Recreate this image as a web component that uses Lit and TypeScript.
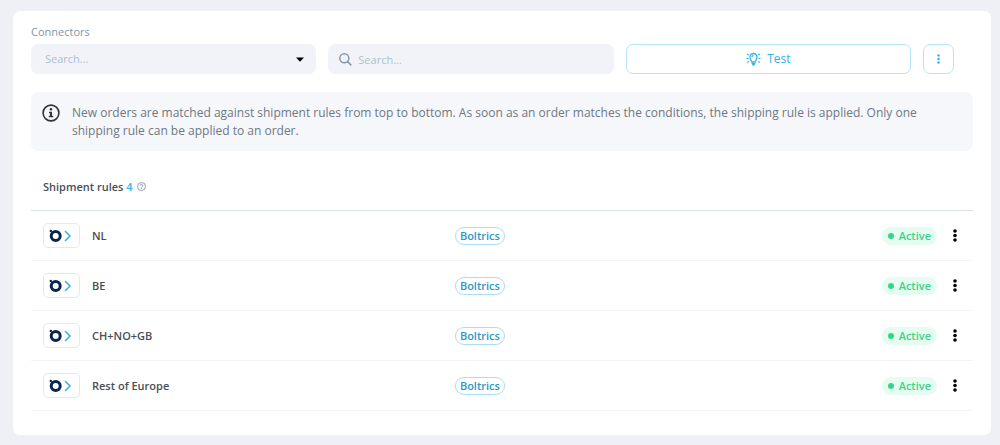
import { LitElement, html, css, svg } from "lit";
import { customElement, property } from "lit/decorators.js";

@customElement("rule-table")
class RuleTable extends LitElement {
  @property({ attribute: false }) rules: string[] = [];

  static styles = css`
    :host { display: block; }
    table { width: 100%; border-collapse: separate; border-spacing: 0; table-layout: fixed; border-top: 1px solid #d9dde4; }
    td { height: 49px; padding: 0; border-bottom: 1px solid #f3f4f7; vertical-align: middle; }
    .col-name { width: 45%; }
    .col-menu { width: 36px; }
    .name { display: flex; align-items: center; gap: 12px; padding-left: 12px; font-weight: 600; color: #484e56; }
    .logo { box-sizing: border-box; width: 37px; height: 25px; border: 1px solid #e6e8ec; border-radius: 5px; }
    .logo svg { display: block; }
    .status { text-align: right; }
    .tag, .active { display: inline-flex; align-items: center; box-sizing: border-box; height: 18px; border-radius: 9px; font-weight: 600; vertical-align: middle; }
    .tag { padding: 0 4px; border: 1px solid #a9def5; color: #2f97c4; }
    .active { gap: 5px; padding: 0 6px; background: #e4fdf0; color: #44cf8b; }
    .dot { width: 6px; height: 6px; border-radius: 50%; background: #35d585; }
    button { display: flex; align-items: center; justify-content: center; width: 36px; height: 24px; padding: 0; border: 0; background: none; color: #000; }
    button svg { display: block; }
  `;

  render() {
    return html`<table aria-label="Shipment rules">
      <colgroup><col class="col-name" /><col /><col /><col class="col-menu" /></colgroup>
      <tbody>
        ${this.rules.map((name) => html`<tr>
          <td><div class="name">
            <span class="logo"><svg width="35" height="23" viewBox="0 0 35 23" aria-hidden="true">
              <circle cx="11.7" cy="12" r="4.5" fill="none" stroke="#08264d" stroke-width="3" />
              <circle cx="6.8" cy="7" r="1.2" fill="#08264d" />
              <path d="M21 7l5 5-5 5" fill="none" stroke="#36b2e8" stroke-width="1.5" />
            </svg></span>${name}
          </div></td>
          <td><span class="tag">Boltrics</span></td>
          <td class="status"><span class="active"><span class="dot"></span>Active</span></td>
          <td><button type="button" aria-label="Rule options"><svg width="4" height="13" viewBox="0 0 4 13" fill="currentColor">
            <circle cx="2" cy="2" r="1.8" /><circle cx="2" cy="6.5" r="1.8" /><circle cx="2" cy="11" r="1.8" />
          </svg></button></td>
        </tr>`)}
      </tbody>
    </table>`;
  }
}

@customElement("app-root")
class AppRoot extends LitElement {
  static styles = css`
    :host { display: block; box-sizing: border-box; min-height: 100vh; padding: 11px 9px 10px 13px; background: #eff0f5; font: 11px/16px "Open Sans", "Noto Sans", sans-serif; color: #484e56; }
    .card { padding: 13px 18px 24px; border-radius: 7px; background: #fff; }
    .toolbar { display: grid; grid-template-columns: 1fr 1fr 1fr 31px; gap: 0 12px; align-items: end; padding-right: 19px; }
    .field { display: grid; gap: 4px; }
    label { color: #8496a9; }
    .box { display: grid; align-items: center; height: 30px; border-radius: 7px; background: #f2f3f8; }
    .select { grid-template-columns: 1fr 24px; }
    select, input { font: inherit; color: #b0bfce; border: 0; background: none; outline: 0; margin: 0; min-width: 0; height: 28px; box-sizing: border-box; }
    select { grid-area: 1 / 1 / 2 / 3; appearance: none; padding: 0 24px 0 14px; }
    .caret { grid-area: 1 / 2; width: 8px; height: 5px; justify-self: start; margin-left: 4px; pointer-events: none; }
    .search { grid-template-columns: 13px 1fr; gap: 6px; padding: 0 11px; }
    input { padding: 0; }
    input::placeholder { color: #b0bfce; opacity: 1; }
    button { display: flex; align-items: center; justify-content: center; gap: 6px; box-sizing: border-box; height: 30px; padding: 0; border: 1px solid #b5e5f9; border-radius: 7px; background: #fff; color: #32b3e8; font: 12px/16px "Open Sans", "Noto Sans", sans-serif; }
    .info { display: flex; gap: 12px; margin-top: 18px; padding: 12px 11px 11px; border-radius: 7px; background: #f6f7fb; color: #6d7883; font-size: 12px; line-height: 18px; }
    .info svg { flex: none; }
    .info p { margin: 0; }
    header { display: flex; align-items: center; gap: 4px; height: 47px; margin-top: 12px; padding-left: 12px; }
    h2 { margin: 0; font: inherit; font-weight: 600; }
    .count { color: #36b2e8; }
  `;

  render() {
    const rays = svg`<path d="M1.2 2l1.6 1M.5 6.3h2M1.2 10.5l1.6-1M13.8 2l-1.6 1M14.5 6.3h-2M13.8 10.5l-1.6-1" />`;
    return html`<main class="card">
      <div class="toolbar">
        <div class="field">
          <label for="connector">Connectors</label>
          <div class="box select">
            <select id="connector"><option>Search...</option></select>
            <svg class="caret" viewBox="0 0 8 5" aria-hidden="true"><path d="M0 .5h8L4 4.8z" /></svg>
          </div>
        </div>
        <div class="box search">
          <svg width="13" height="13" viewBox="0 0 13 13" fill="none" stroke="#8298af" stroke-width="1.5" aria-hidden="true"><circle cx="5.3" cy="5.3" r="4.5" /><path d="M8.6 8.6l3.8 3.8" /></svg>
          <input type="search" aria-label="Search" placeholder="Search..." />
        </div>
        <button type="button">
          <svg width="15" height="14" viewBox="0 0 15 14" fill="none" stroke="currentColor" stroke-width="1.3" aria-hidden="true">
            ${rays}
            <path d="M5.7 9.8C5.4 8.5 4 7.5 4 5a3.5 3.5 0 0 1 7 0c0 2.5-1.4 3.5-1.7 4.8zM6 5a1.7 1.7 0 0 1 1.5-1.7" />
            <path d="M5.6 11.4h3.8M6.2 12.6h2.6" stroke-width="1.6" />
          </svg>Test
        </button>
        <button type="button" aria-label="More options">
          <svg width="3" height="10" viewBox="0 0 3 10" fill="currentColor"><circle cx="1.5" cy="1.5" r="1.2" /><circle cx="1.5" cy="5" r="1.2" /><circle cx="1.5" cy="8.5" r="1.2" /></svg>
        </button>
      </div>
      <div class="info">
        <svg width="18" height="18" viewBox="0 0 18 18" aria-hidden="true"><circle cx="9" cy="9" r="7.9" fill="none" stroke="#30363c" stroke-width="1.6" /><circle cx="9" cy="5.2" r="1.3" fill="#30363c" /><path d="M7 7.7h3v4h1.2v1.5H6.8v-1.5H8V9.2H7z" fill="#30363c" /></svg>
        <p>New orders are matched against shipment rules from top to bottom. As soon as an order matches the conditions, the shipping rule is applied. Only one shipping rule can be applied to an order.</p>
      </div>
      <header>
        <h2>Shipment rules <span class="count">4</span></h2>
        <svg width="9" height="9" viewBox="0 0 9 9" fill="none" stroke="#7f93a7" stroke-width=".9" aria-hidden="true"><circle cx="4.5" cy="4.5" r="4" /><path d="M3.2 3.7a1.3 1.3 0 1 1 1.9 1.1c-.5.2-.6.4-.6.7M4.5 6.2v.8" /></svg>
      </header>
      <rule-table .rules=${["NL", "BE", "CH+NO+GB", "Rest of Europe"]}></rule-table>
    </main>`;
  }
}
